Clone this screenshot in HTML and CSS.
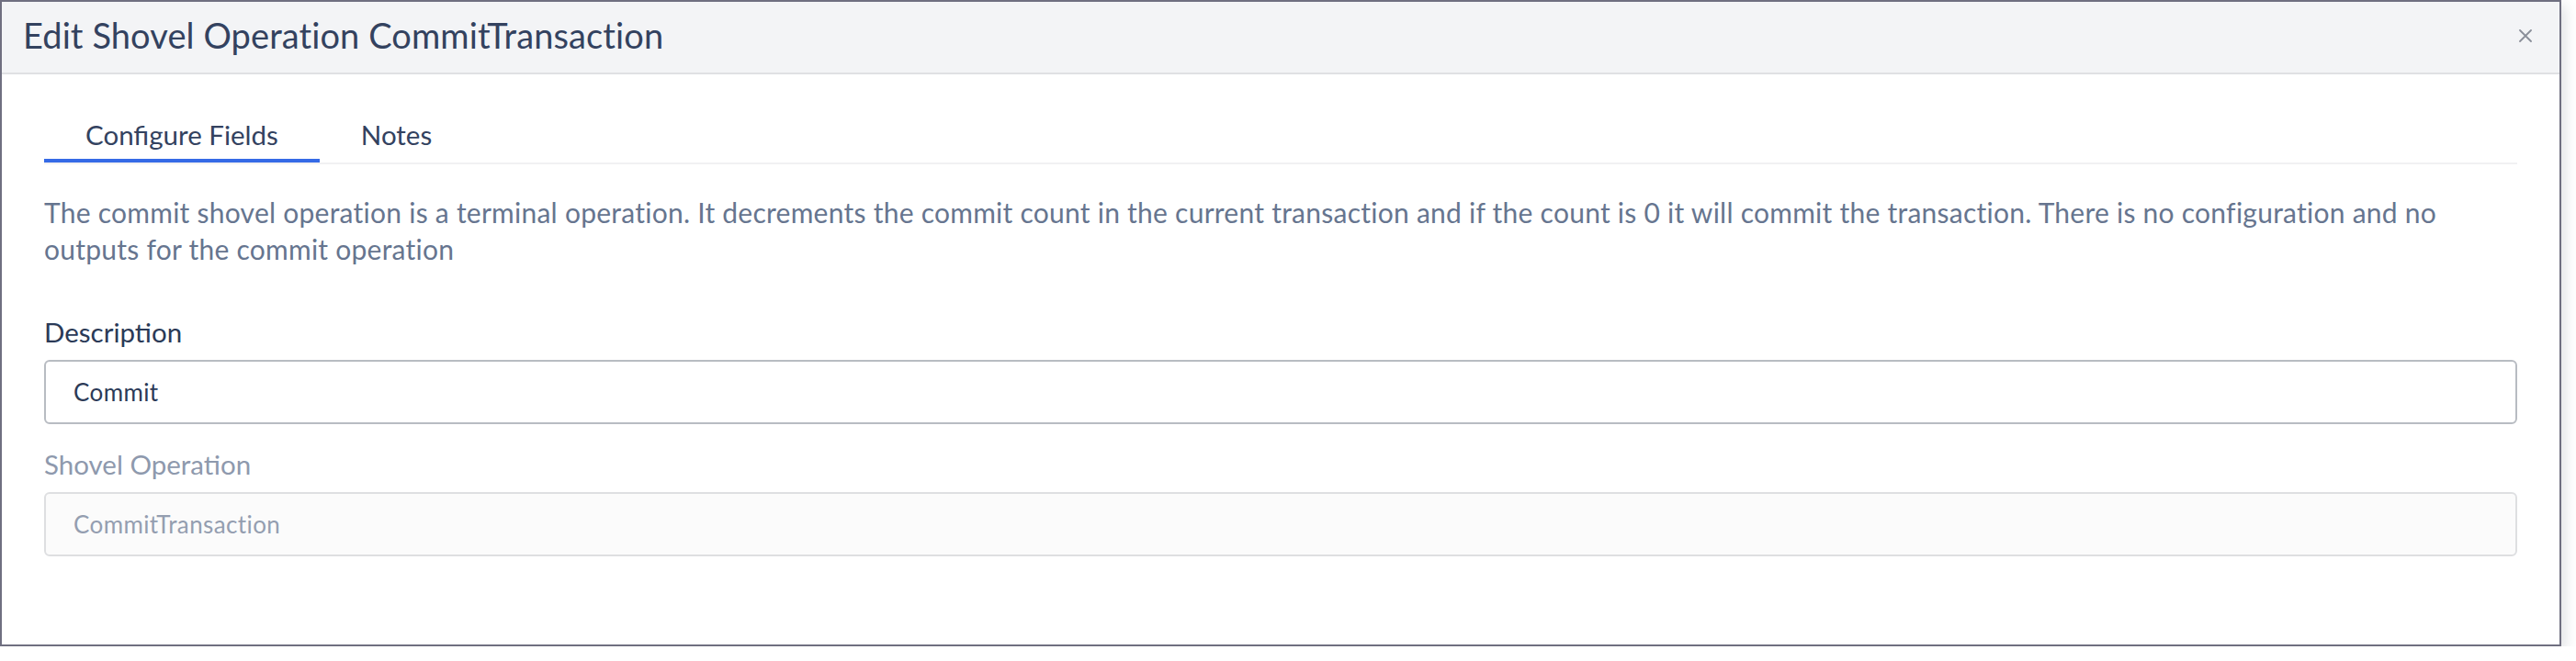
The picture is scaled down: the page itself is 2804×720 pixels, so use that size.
FILE: index.html
```html
<!DOCTYPE html>
<html lang="en">
<head>
<meta charset="utf-8">
<title>Edit Shovel Operation CommitTransaction</title>
<link rel="stylesheet" href="styles.css">
</head>
<body>
<div class="modal">
  <header class="modal-header">
    <h2 class="modal-title">Edit Shovel Operation CommitTransaction</h2>
    <button class="close-btn" type="button" aria-label="Close">
      <svg width="14" height="14" viewBox="0 0 14 14"><path d="M1 1 L13 13 M13 1 L1 13" stroke="#8a8f99" stroke-width="1.8" fill="none" stroke-linecap="round"/></svg>
    </button>
  </header>
  <div class="modal-body">
    <nav class="tabs">
      <a class="tab active">Configure Fields</a>
      <a class="tab">Notes</a>
    </nav>
    <p class="help">The commit shovel operation is a terminal operation. It decrements the commit count in the current transaction and if the count is 0 it will commit the transaction. There is no configuration and no outputs for the commit operation</p>
    <div class="field">
      <label class="label">Description</label>
      <input class="input" type="text" value="Commit">
    </div>
    <div class="field field-disabled">
      <label class="label">Shovel Operation</label>
      <input class="input" type="text" value="CommitTransaction" disabled>
    </div>
  </div>
</div>
</body>
</html>
```
FILE: styles.css
```css
* { box-sizing: border-box; }
html, body { background: #ffffff; }
body {
  margin: 0;
  font-family: "Lato", "Liberation Sans", sans-serif;
  color: #33425f;
}
.modal {
  margin-right: 16px;
  border: 2px solid #6f6f80;
  background: #ffffff;
  box-shadow: 4px 6px 14px rgba(30, 40, 60, 0.14);
}
.modal-header {
  display: flex;
  align-items: center;
  height: 79px;
  padding: 0 30px 0 23px;
  background: #f3f4f6;
  border-bottom: 2px solid #dfe0e3;
}
.modal-title {
  flex: 1;
  margin: 0;
  padding-bottom: 6px;
  font-size: 38px;
  line-height: 40px;
  font-weight: 400;
  letter-spacing: 0.1px;
  color: #33425f;
}
.close-btn {
  display: flex;
  width: 14px;
  height: 14px;
  padding: 0;
  margin-bottom: 3px;
  border: 0;
  background: none;
}
.modal-body {
  padding: 34px 46px 96px;
}
.tabs {
  display: flex;
  border-bottom: 2px solid #f1f1f3;
}
.tab {
  padding: 12px 45px 6px;
  font-size: 29.5px;
  line-height: 40px;
  color: #33425f;
  border-bottom: 4px solid transparent;
}
.tab.active {
  border-bottom-color: #356ae6;
}
.help {
  margin: 32px 0 51px;
  font-size: 30px;
  line-height: 40px;
  letter-spacing: 0.25px;
  color: #66758f;
}
.field + .field {
  margin-top: 24px;
}
.label {
  display: block;
  margin-bottom: 10px;
  font-size: 29.5px;
  line-height: 40px;
  color: #2b3a57;
}
.input {
  display: block;
  width: 100%;
  height: 70px;
  padding: 0 30px;
  font-family: "Lato", "Liberation Sans", sans-serif;
  font-size: 26px;
  letter-spacing: 0.4px;
  color: #2b3a57;
  background: #ffffff;
  border: 2px solid #b8bcc2;
  border-radius: 6px;
  outline: none;
}
.field-disabled .label {
  color: #8e99ad;
}
.field-disabled .input {
  color: #949eb0;
  background: #fbfbfb;
  border-color: #dedfe1;
}
```
